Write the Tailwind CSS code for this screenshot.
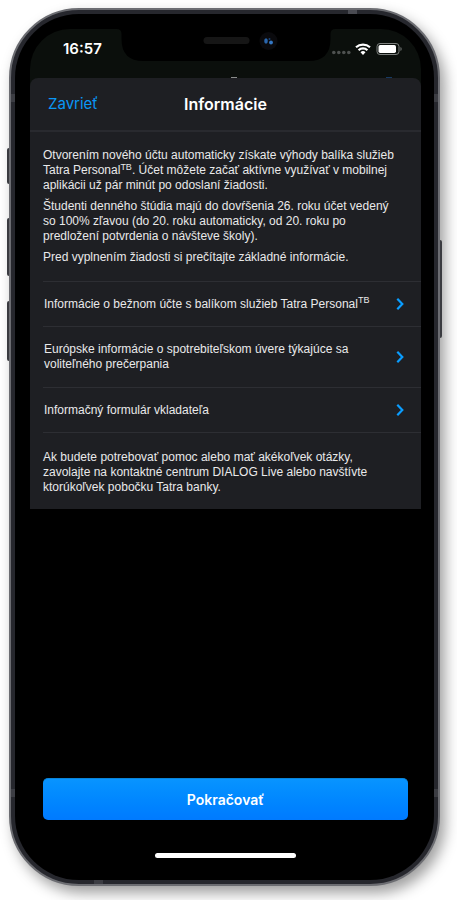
<!DOCTYPE html>
<html lang="sk">
<head>
    <meta charset="UTF-8">
    <meta name="viewport" content="width=device-width, initial-scale=1.0">
    <title>Informácie</title>
    <script src="https://cdn.jsdelivr.net/npm/@tailwindcss/browser@4"></script>
</head>
<body class="bg-white min-h-screen flex flex-col pt-2 pb-[14px] pl-[9px] pr-[17px] font-['Liberation_Sans',Arial,sans-serif]">

    <!-- Phone body -->
    <div class="relative flex-1 flex flex-col rounded-[70px] border-2 border-[#6c6d72] bg-[#26272d] p-1 shadow-[5px_7px_14px_rgba(0,0,0,0.38)]">
        <!-- Side buttons -->
        <span class="absolute -left-1 top-[138px] w-[2px] h-[36px] bg-[#3a3b40] rounded-l-sm"></span>
        <span class="absolute -left-1 top-[208px] w-[2px] h-[58px] bg-[#3a3b40] rounded-l-sm"></span>
        <span class="absolute -left-1 top-[291px] w-[2px] h-[60px] bg-[#3a3b40] rounded-l-sm"></span>
        <span class="absolute -right-1 top-[230px] w-[2px] h-[98px] bg-[#3a3b40] rounded-r-sm"></span>

        <!-- Antenna lines -->
        <span class="absolute left-0 top-[84px] w-1 h-2 bg-[#3c3d43]"></span>
        <span class="absolute left-0 bottom-[87px] w-1 h-2 bg-[#3c3d43]"></span>
        <span class="absolute right-0 top-[84px] w-1 h-2 bg-[#3c3d43]"></span>
        <span class="absolute right-0 bottom-[87px] w-1 h-2 bg-[#3c3d43]"></span>
        <span class="absolute right-[81px] top-0 w-[9px] h-1 bg-[#4a4b52]"></span>
        <span class="absolute left-[83px] bottom-0 w-[9px] h-1 bg-[#3c3d43]"></span>

        <div class="flex-1 flex flex-col rounded-[64px] bg-black pt-[15px] pl-[15px] pr-[13px] pb-[15px]">
            <div class="relative flex-1 flex flex-col">

                <!-- Status bar -->
                <div class="h-[57px] -mb-2 rounded-t-[40px] bg-[#0b0f0c]">
                    <div class="h-10 flex items-center justify-between pl-[33px] pr-[19px]">
                        <span class="text-white text-[15px] leading-5 font-semibold font-[Inter,sans-serif]">16:57</span>
                        <svg class="w-[70px] h-3" viewBox="0 0 70 12" fill="none" aria-hidden="true">
                            <g fill="#4e5150">
                                <circle cx="1.800" cy="9.500" r="1.800"/>
                                <circle cx="6.800" cy="9.500" r="1.800"/>
                                <circle cx="11.800" cy="9.500" r="1.800"/>
                                <circle cx="16.800" cy="9.500" r="1.800"/>
                            </g>
                            <g stroke="#fff" stroke-width="2.200">
                                <path d="M24 4.300a10.400 10.400 0 0 1 14 0"/>
                                <path d="M26.600 7.200a6.400 6.400 0 0 1 8.800 0"/>
                            </g>
                            <path d="M28.500 9.300a3.600 3.600 0 0 1 5 0L31 12z" fill="#fff"/>
                            <rect x="45" y=".5" width="22" height="11" rx="3" stroke="#7d807e"/>
                            <rect x="46.500" y="2" width="17.500" height="8" rx="1.700" fill="#fff"/>
                            <path d="M68.500 4v4c1.500-.6 1.500-3.400 0-4z" fill="#7d807e"/>
                        </svg>
                    </div>
                </div>

                <!-- Notch with speaker and camera -->
                <svg class="absolute left-1/2 -translate-x-1/2 top-0 w-[219px] h-8" viewBox="0 0 219 32" aria-hidden="true">
                    <path d="M0 0h219q-5 0-5 5v5q0 22-22 22H27Q5 32 5 10V5Q5 0 0 0z" fill="#000"/>
                    <rect x="87" y="8" width="46" height="7" rx="3.500" fill="#161616"/>
                    <circle cx="152" cy="12" r="9" fill="#0a0a0d"/>
                    <ellipse cx="149.500" cy="12" rx="1.800" ry="2.800" fill="#2a66ad"/>
                    <circle cx="154.500" cy="13.500" r="1.900" fill="#3478c4"/>
                    <circle cx="153" cy="10" r="1" fill="#1a4172"/>
                </svg>

                <!-- Edge of the page behind the sheet -->
                <span class="absolute top-12 left-[201px] w-[6px] h-px bg-[#8b8d8c]"></span>
                <span class="absolute top-12 right-[29px] w-[6px] h-px bg-[#173a63]"></span>

                <main class="relative rounded-t-lg bg-[#1e1f23] text-[#e9e9ea] text-xs leading-[15px]">
                    <header class="h-[54px] grid grid-cols-[1fr_auto_1fr] items-center px-[18px] border-b-2 border-[#292a2f] font-[Inter,sans-serif]">
                        <button type="button" class="justify-self-start text-[15px] leading-5 text-[#0a97f5]">Zavrieť</button>
                        <h1 class="text-base leading-5 font-semibold text-white">Informácie</h1>
                    </header>

                    <div class="pl-[13px] pt-4 pb-4 space-y-[6px]">
                        <p>Otvorením nového účtu automaticky získate výhody balíka služieb<br>
                            Tatra Personal<sup class="text-[9px] leading-none">TB</sup>. Účet môžete začať aktívne využívať v mobilnej<br>
                            aplikácii už pár minút po odoslaní žiadosti.</p>
                        <p>Študenti denného štúdia majú do dovŕšenia 26. roku účet vedený<br>
                            so 100% zľavou (do 20. roku automaticky, od 20. roku po<br>
                            predložení potvrdenia o návšteve školy).</p>
                        <p>Pred vyplnením žiadosti si prečítajte základné informácie.</p>
                    </div>

                    <!-- Documents -->
                    <nav class="ml-[13px] border-b border-[#2d2e33]">
                        <a href="#" class="flex items-center justify-between h-[45px] pr-[17px] pl-px border-t border-[#2d2e33]">
                            <span>Informácie o bežnom účte s balíkom služieb Tatra Personal<sup class="text-[9px] leading-none">TB</sup></span>
                            <svg class="w-2 h-3 shrink-0" viewBox="0 0 8 12" fill="none" stroke="#0a9dff" stroke-width="2.200" aria-hidden="true"><path d="M1.300 .8l5 5.200-5 5.200"/></svg>
                        </a>
                        <a href="#" class="flex items-center justify-between h-[61px] pr-[17px] pl-px border-t border-[#2d2e33]">
                            <span>Európske informácie o spotrebiteľskom úvere týkajúce sa<br>voliteľného prečerpania</span>
                            <svg class="w-2 h-3 shrink-0" viewBox="0 0 8 12" fill="none" stroke="#0a9dff" stroke-width="2.200" aria-hidden="true"><path d="M1.300 .8l5 5.200-5 5.200"/></svg>
                        </a>
                        <a href="#" class="flex items-center justify-between h-[45px] pr-[17px] pl-px border-t border-[#2d2e33]">
                            <span>Informačný formulár vkladateľa</span>
                            <svg class="w-2 h-3 shrink-0" viewBox="0 0 8 12" fill="none" stroke="#0a9dff" stroke-width="2.200" aria-hidden="true"><path d="M1.300 .8l5 5.200-5 5.200"/></svg>
                        </a>
                    </nav>

                    <p class="pl-[13px] pt-[17px] pb-[14px]">Ak budete potrebovať pomoc alebo mať akékoľvek otázky,<br>
                        zavolajte na kontaktné centrum DIALOG Live alebo navštívte<br>
                        ktorúkoľvek pobočku Tatra banky.</p>
                </main>

                <!-- Bottom action -->
                <div class="mt-auto px-[13px]">
                    <button type="button" class="w-full h-[42px] rounded-[5px] border-t border-[#0a84d8] bg-linear-to-b from-[#0894ff] to-[#007aff] text-white text-sm leading-5 font-semibold font-[Inter,sans-serif]">Pokračovať</button>
                    <div class="mx-auto mt-[33px] mb-[7px] w-[141px] h-[5px] rounded-full bg-white"></div>
                </div>
            </div>
        </div>
    </div>

</body>
</html>
